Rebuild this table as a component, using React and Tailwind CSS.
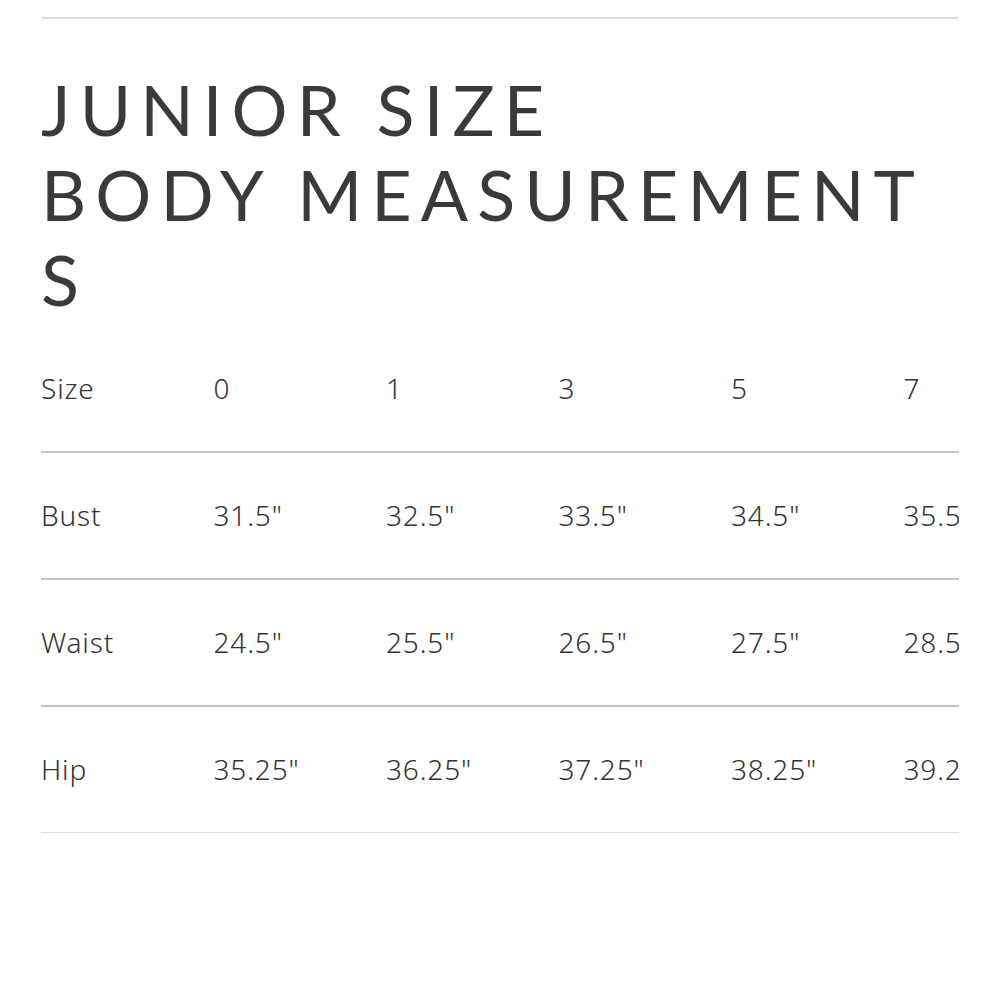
export default function App() {
  const cols = ["0", "1", "3", "5", "7"];
  const rows = [
    ["Bust", ['31.5"', '32.5"', '33.5"', '34.5"', '35.5"']],
    ["Waist", ['24.5"', '25.5"', '26.5"', '27.5"', '28.5"']],
    ["Hip", ['35.25"', '36.25"', '37.25"', '38.25"', '39.25"']],
  ];
  const cell = "w-[172.5px] shrink-0 flex items-center whitespace-nowrap";
  return (
    <div className="w-[1000px] h-[1000px] bg-white px-[41px] pt-[17px]">
      <div className="h-[1.5px] bg-[#dcdcdc]" />
      <h1
        className="mt-[48px] text-[70px] leading-[85px] tracking-[0.13em] text-[#3a3a3a] font-normal"
        style={{ fontFamily: "Lato, 'Open Sans', sans-serif" }}
      >
        <span className="block whitespace-nowrap">JUNIOR SIZE</span>
        <span className="block whitespace-nowrap">BODY MEASUREMENT</span>
        <span className="block whitespace-nowrap">S</span>
      </h1>
      <div
        className="mt-[3px] w-[918px] overflow-hidden text-[28px] font-light tracking-[0.03em] text-[#333]"
        style={{ fontFamily: "'Noto Sans', 'Open Sans', sans-serif" }}
      >
        <div className="flex h-[128px] border-b-2 border-[#c4c4c4]">
          <div className={cell}>Size</div>
          {cols.map((c) => (
            <div key={c} className={cell}>{c}</div>
          ))}
        </div>
        {rows.map(([label, vals], i) => (
          <div
            key={label}
            className={
              i === rows.length - 1
                ? "flex h-[126px] border-b border-[#dedede]"
                : "flex h-[127px] border-b-2 border-[#c4c4c4]"
            }
          >
            <div className={cell}>{label}</div>
            {vals.map((v, j) => (
              <div key={j} className={cell}>{v}</div>
            ))}
          </div>
        ))}
      </div>
    </div>
  );
}
